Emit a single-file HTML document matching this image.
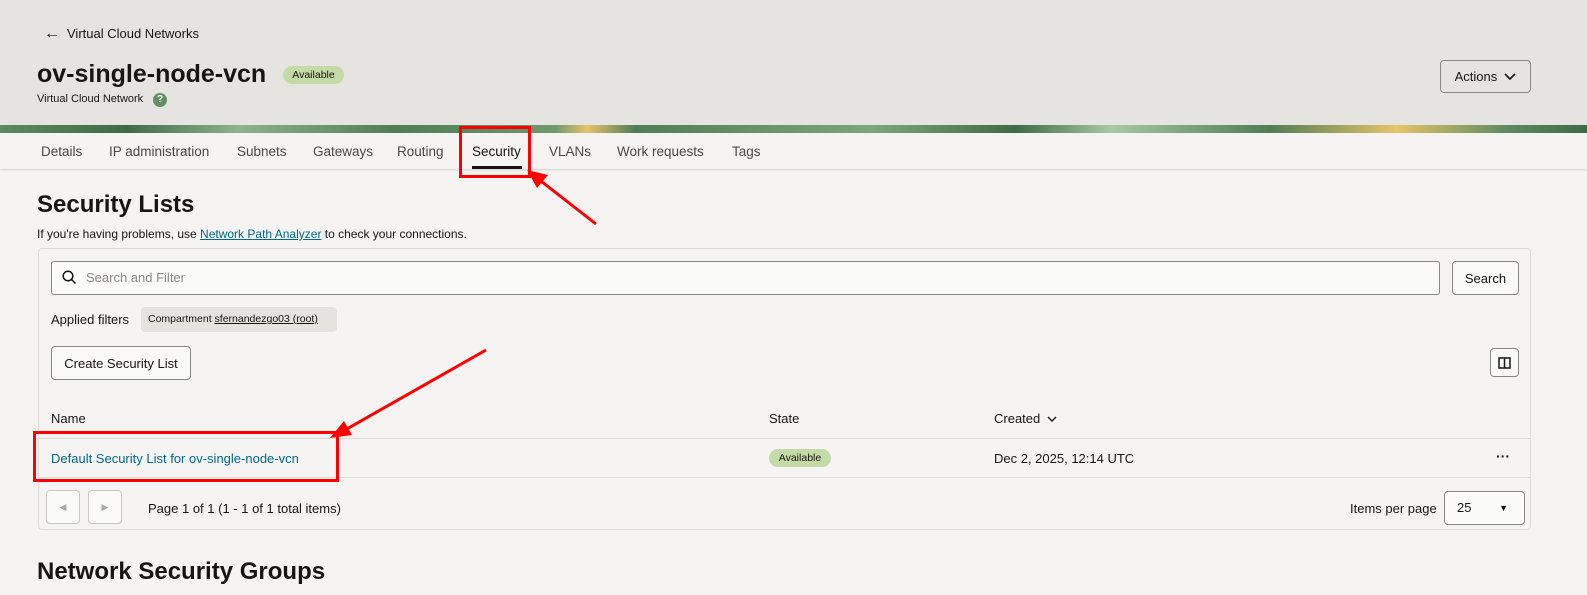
<!DOCTYPE html>
<html><head><meta charset="utf-8"><style>
*{box-sizing:border-box;margin:0;padding:0}
body{width:1587px;height:595px;overflow:hidden;background:#f5f4f2;font-family:"Liberation Sans",sans-serif;color:#161513;position:relative}
.a{position:absolute}
.hdr{left:0;top:0;width:1587px;height:126px;background:#e5e4e0}
.band{left:0;top:125px;width:1587px;height:8px;background:linear-gradient(90deg,#5d8a62 0,#3e6b45 8%,#8fb38f 15%,#4f7d55 25%,#6e9a6c 35%,#e6c46a 37%,#4f7d55 40%,#7da77c 55%,#3e6b45 64%,#a8c9a4 70%,#4f7d55 80%,#e6c46a 88%,#5d8a62 95%,#3e6b45 100%)}
.tabs{left:0;top:133px;width:1587px;height:36px;background:#f5f4f2;box-shadow:0 1px 2px rgba(0,0,0,.15)}
.tab{top:144px;font-size:13.5px;color:#4a4846}
.btn{border:1px solid #8a8886;border-radius:4px;background:#f9f9f8;font-size:13px;display:flex;align-items:center;justify-content:center}
.card{left:38px;top:248px;width:1493px;height:282px;border:1px solid #dcdbd8;border-radius:4px;background:#f5f4f2}
.line{height:1px;background:#dcdbd8}
</style></head><body>
<div class="a hdr"></div>
<div class="a band"></div>
<div class="a" style="left:44px;top:25px;font-size:16px">&#8592;</div>
<div class="a" style="left:67px;top:26px;font-size:13px">Virtual Cloud Networks</div>
<div class="a" style="left:37px;top:60px;font-size:25px;font-weight:bold">ov-single-node-vcn</div>
<div class="a" style="left:283px;top:66px;width:61px;height:18px;border-radius:9px;background:#c4dba8;font-size:10.5px;text-align:center;line-height:18px">Available</div>
<div class="a" style="left:37px;top:93px;font-size:11px">Virtual Cloud Network</div>
<div class="a" style="left:153px;top:93px;width:14px;height:14px;border-radius:7px;background:#5f8f63;color:#fff;font-size:10px;font-weight:bold;text-align:center;line-height:14px">?</div>
<div class="a btn" style="left:1440px;top:60px;width:91px;height:33px;background:#e5e4e0">Actions&nbsp;&nbsp;<svg width="12" height="8"><path d="M1 1l5 5 5-5" stroke="#161513" stroke-width="1.6" fill="none"/></svg></div>
<div class="a tabs"></div>
<div class="a tab" style="left:41px">Details</div>
<div class="a tab" style="left:109px">IP administration</div>
<div class="a tab" style="left:237px">Subnets</div>
<div class="a tab" style="left:313px">Gateways</div>
<div class="a tab" style="left:397px">Routing</div>
<div class="a tab" style="left:472px;color:#161513">Security</div>
<div class="a" style="left:472px;top:166px;width:50px;height:3px;background:#161513"></div>
<div class="a tab" style="left:549px">VLANs</div>
<div class="a tab" style="left:617px">Work requests</div>
<div class="a tab" style="left:732px">Tags</div>
<div class="a" style="left:37px;top:191px;font-size:24px;font-weight:bold">Security Lists</div>
<div class="a" style="left:37px;top:227px;font-size:12px">If you're having problems, use <span style="color:#00688c;text-decoration:underline">Network Path Analyzer</span> to check your connections.</div>
<div class="a card"></div>
<div class="a" style="left:51px;top:261px;width:1389px;height:34px;border:1px solid #8a8886;border-radius:3px;background:#fbfbfa"></div>
<svg class="a" style="left:62px;top:270px" width="14" height="15"><circle cx="6" cy="6" r="4.8" stroke="#161513" stroke-width="1.5" fill="none"/><path d="M9.5 9.5l4 4" stroke="#161513" stroke-width="1.5"/></svg>
<div class="a" style="left:86px;top:270px;font-size:13px;color:#8a8886">Search and Filter</div>
<div class="a btn" style="left:1452px;top:261px;width:67px;height:34px">Search</div>
<div class="a" style="left:51px;top:312px;font-size:13px">Applied filters</div>
<div class="a" style="left:141px;top:307px;width:196px;height:25px;background:#e4e3e0;border-radius:4px;font-size:10.5px;line-height:25px;padding-left:7px">Compartment <u>sfernandezgo03 (root)</u></div>
<div class="a btn" style="left:51px;top:346px;width:140px;height:34px">Create Security List</div>
<div class="a btn" style="left:1490px;top:348px;width:29px;height:29px"><svg width="13" height="12"><rect x="1" y="1" width="11" height="10" stroke="#161513" stroke-width="1.5" fill="none"/><path d="M6.5 1v10" stroke="#161513" stroke-width="1.5"/></svg></div>
<div class="a" style="left:51px;top:411px;font-size:13px">Name</div>
<div class="a" style="left:769px;top:411px;font-size:13px">State</div>
<div class="a" style="left:994px;top:411px;font-size:13px">Created&nbsp;&nbsp;<svg width="10" height="7"><path d="M1 1l4 4 4-4" stroke="#161513" stroke-width="1.4" fill="none"/></svg></div>
<div class="a line" style="left:39px;top:438px;width:1491px"></div>
<div class="a" style="left:51px;top:451px;font-size:13px;color:#00688c">Default Security List for ov-single-node-vcn</div>
<div class="a" style="left:769px;top:449px;width:62px;height:18px;border-radius:9px;background:#c4dba8;font-size:10.5px;text-align:center;line-height:18px">Available</div>
<div class="a" style="left:994px;top:451px;font-size:13px">Dec 2, 2025, 12:14 UTC</div>
<div class="a" style="left:1496px;top:448px;font-size:14px;font-weight:bold">&middot;&middot;&middot;</div>
<div class="a line" style="left:39px;top:477px;width:1491px"></div>
<div class="a btn" style="left:46px;top:490px;width:34px;height:34px;border-color:#c9c8c5;color:#a9a8a6;font-size:9px">&#9664;</div>
<div class="a btn" style="left:88px;top:490px;width:34px;height:34px;border-color:#c9c8c5;color:#a9a8a6;font-size:9px">&#9654;</div>
<div class="a" style="left:148px;top:501px;font-size:13px">Page 1 of 1 (1 - 1 of 1 total items)</div>
<div class="a" style="left:1350px;top:501px;font-size:13px">Items per page</div>
<div class="a" style="left:1444px;top:491px;width:81px;height:34px;border:1px solid #8a8886;border-radius:4px;background:#fbfbfa;font-size:13px;line-height:32px;padding-left:12px">25<span style="position:absolute;right:16px;font-size:9px">&#9660;</span></div>
<div class="a" style="left:37px;top:558px;font-size:24px;font-weight:bold">Network Security Groups</div>
<div class="a" style="left:459px;top:126px;width:72px;height:52px;border:3px solid #f00"></div>
<div class="a" style="left:33px;top:431px;width:306px;height:51px;border:3px solid #f00"></div>
<svg class="a" style="left:0;top:0" width="1587" height="595"><path d="M596 224L537 178" stroke="#f00" stroke-width="3"/><path d="M527 170l21 5-11 13z" fill="#f00"/><path d="M486 350L345 430" stroke="#f00" stroke-width="3"/><path d="M330 438l14-17 8 14z" fill="#f00"/></svg>
</body></html>
